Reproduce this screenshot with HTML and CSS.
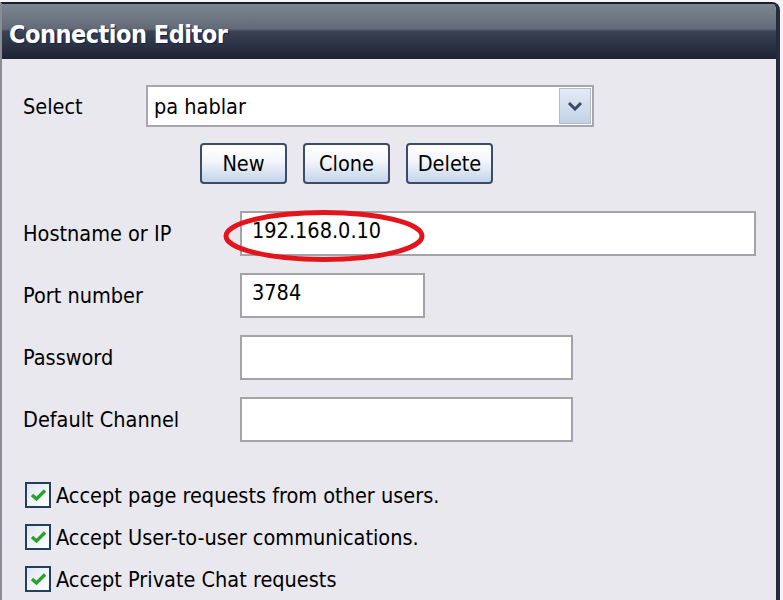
FILE: index.html
```html
<!DOCTYPE html>
<html lang="en">
<head>
    <meta charset="UTF-8">
    <meta name="viewport" content="width=device-width, initial-scale=1.0">
    <link rel="stylesheet" href="styles.css">
    <title>Connection Editor</title>
</head>
<body>
    <div class="window">
        <div class="titlebar"><h1>Connection Editor</h1></div>
        <div class="content">
            <div class="select-row">
                <label class="lbl-select">Select</label>
                <div class="combo">
                    <span class="combo-text">pa hablar</span>
                    <span class="combo-btn">
                        <svg width="16" height="10" viewBox="0 0 16 10"><path d="M2 2 L8 8 L14 2" fill="none" stroke="#3b4a5e" stroke-width="3"/></svg>
                    </span>
                </div>
            </div>
            <div class="buttons">
                <button class="btn btn-new">New</button>
                <button class="btn btn-clone">Clone</button>
                <button class="btn btn-delete">Delete</button>
            </div>
            <div class="field host">
                <label>Hostname or IP</label>
                <input type="text" class="in-wide" value="192.168.0.10">
                <svg class="mark" width="206" height="56" viewBox="0 0 206 56"><ellipse cx="103" cy="28" rx="98" ry="23.5" fill="none" stroke="#e3141b" stroke-width="5"/></svg>
            </div>
            <div class="field">
                <label>Port number</label>
                <input type="text" class="in-short" value="3784">
            </div>
            <div class="field">
                <label>Password</label>
                <input type="password" class="in-mid" value="">
            </div>
            <div class="field">
                <label>Default Channel</label>
                <input type="text" class="in-mid" value="">
            </div>
            <div class="checks">
                <div class="check"><span class="box"><svg width="17" height="14" viewBox="0 0 17 14"><path d="M2 7 L6.5 11 L15 2.5" fill="none" stroke="#2ca02c" stroke-width="3.4"/></svg></span>Accept page requests from other users.</div>
                <div class="check"><span class="box"><svg width="17" height="14" viewBox="0 0 17 14"><path d="M2 7 L6.5 11 L15 2.5" fill="none" stroke="#2ca02c" stroke-width="3.4"/></svg></span>Accept User-to-user communications.</div>
                <div class="check"><span class="box"><svg width="17" height="14" viewBox="0 0 17 14"><path d="M2 7 L6.5 11 L15 2.5" fill="none" stroke="#2ca02c" stroke-width="3.4"/></svg></span>Accept Private Chat requests</div>
            </div>
        </div>
    </div>
</body>
</html>
```

FILE: styles.css
```css
*
{
    box-sizing: border-box;
    font-family: 'DejaVu Sans Condensed', 'DejaVu Sans', sans-serif;
}
html, body{margin: 0;padding: 0;background: #f4f4f6;height: 600px;overflow: hidden;}
.window{
    margin-top: 2px;
    width: 780px;
    height: 610px;
    background: #e9e8ee;
    border-left: 2px solid #8c8c94;
    border-right: 4px solid #262c3b;
    border-top: 2px solid #1b1f2a;
    border-top-right-radius: 8px;
    overflow: hidden;
}
.titlebar{
    height: 55px;
    background: linear-gradient(#7e8592 0%, #626a78 45%, #3a4254 50%, #2b3244 75%, #1e2334 100%);
    padding: 5px 0 0 7px;
    display: flex;
    align-items: center;
}
.titlebar h1{
    margin: 0;
    color: #fff;
    font-size: 25px;
    font-weight: bold;
    letter-spacing: -0.5px;
    text-shadow: 1px 1px 0 #1a1d4a;
}
.content{padding: 26px 0 0 21px;font-size: 21.5px;color: #000;}
label{display: inline-block;width: 217px;}
.select-row{display: flex;align-items: center;height: 42px;}
.lbl-select{width: 123px;}
.combo{
    display: flex;
    align-items: center;
    width: 448px;
    height: 42px;
    background: #fff;
    border: 2px solid #a7a7ab;
    padding: 0 0 0 6px;
}
.combo-text{flex: 1;}
.combo-btn{
    width: 32px;
    height: 36px;
    margin-right: 1px;
    border: 1px solid #b3bccb;
    background: linear-gradient(#e3eaf5, #c2d3e8);
    display: flex;
    align-items: center;
    justify-content: center;
}
.buttons{display: flex;gap: 16px;margin: 16px 0 0 177px;}
.btn{
    height: 41px;
    font-size: 21.5px;
    color: #000;
    border: 2px solid #3c4b66;
    border-radius: 4px;
    background: linear-gradient(#ffffff 0%, #f2f5fa 45%, #c4d4ea 100%);
    padding: 0;
    cursor: pointer;
}
.btn-new{width: 87px;}
.btn-clone{width: 87px;}
.btn-delete{width: 87px;}
.field{display: flex;align-items: center;position: relative;margin-top: 17px;height: 45px;}
.host{margin-top: 27px;}
.field input{
    height: 45px;
    border: 2px solid #a4a4a8;
    background: #fff;
    font-size: 21.5px;
    padding: 0 0 6px 10px;
    outline: none;
}
.in-wide{width: 516px;}
.in-short{width: 185px;}
.in-mid{width: 333px;}
.mark{position: absolute;left: 198px;top: -3px;}
.checks{margin-top: 40px;display: flex;flex-direction: column;gap: 16px;}
.check{display: flex;align-items: center;height: 26px;}
.box{
    width: 26px;
    height: 26px;
    border: 2px solid #22405e;
    background: linear-gradient(135deg, #dfe6ee, #ffffff);
    display: flex;
    align-items: center;
    justify-content: center;
    margin: 0 5px 0 2px;
}
```
